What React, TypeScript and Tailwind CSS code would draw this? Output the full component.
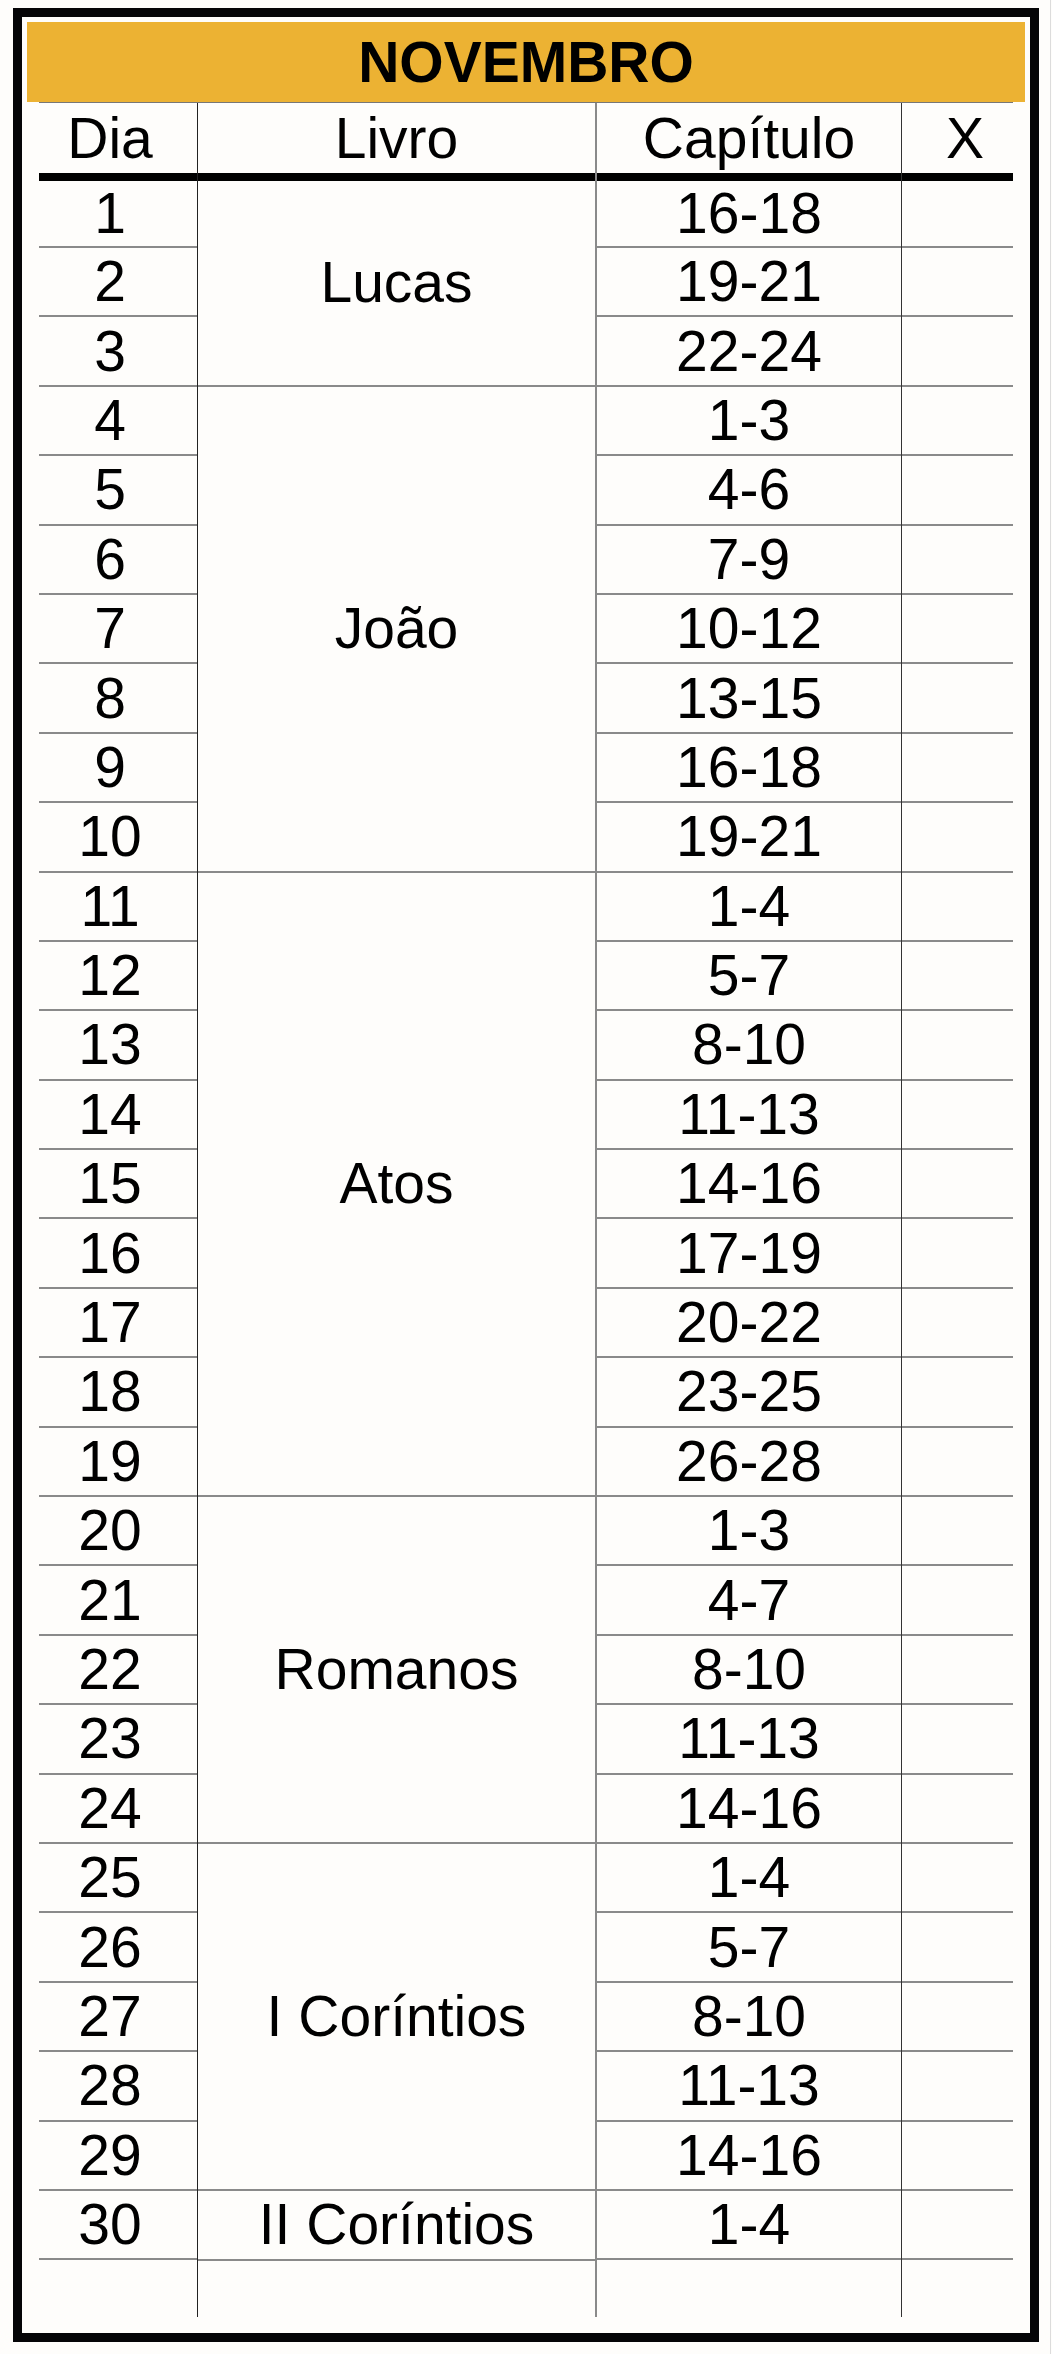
import React from "react";

const caps = [
  "16-18", "19-21", "22-24",
  "1-3", "4-6", "7-9", "10-12", "13-15", "16-18", "19-21",
  "1-4", "5-7", "8-10", "11-13", "14-16", "17-19", "20-22", "23-25", "26-28",
  "1-3", "4-7", "8-10", "11-13", "14-16",
  "1-4", "5-7", "8-10", "11-13", "14-16",
  "1-4",
];

const groups: { name: string; cls: string }[] = [
  { name: "Lucas", cls: "h-[205.8px]" },
  { name: "João", cls: "h-[485.8px]" },
  { name: "Atos", cls: "h-[624.6px]" },
  { name: "Romanos", cls: "h-[347px]" },
  { name: "I Coríntios", cls: "h-[347px]" },
  { name: "II Coríntios", cls: "h-[69.4px]" },
];

function rowCls(i: number) {
  return i === 0 ? "h-[67px]" : "h-[69.4px]";
}

function Header({ label, extra = "" }: { label: string; extra?: string }) {
  return (
    <div className={`h-[70px] shrink-0 flex items-center justify-center ${extra}`}>
      {label}
    </div>
  );
}

function Rule() {
  return <div className="h-[8px] shrink-0 bg-black" />;
}

export default function App() {
  return (
    <div
      className="w-[1052px] h-[2354px] bg-[#fefdfb] flex text-black"
      style={{ fontFamily: '"Liberation Sans", Arial, sans-serif' }}
    >
      <div className="w-[1050px] h-full pt-[8px] pl-[13px]">
        <div className="w-[1026px] h-[2334px] border-[9px] border-[#050507] flex flex-col pt-[5px] px-[5px] pb-[16px]">
          <div className="h-[80px] shrink-0 bg-[#ecb233] flex items-center justify-center text-[57px] font-bold leading-none">
            NOVEMBRO
          </div>
          <div className="flex-1 mx-[12px] border-t border-[#777] flex text-[57px] leading-none">
            {/* Dia */}
            <div className="w-[158px] flex flex-col">
              <Header label="Dia" extra="pr-[16px]" />
              <Rule />
              {caps.map((_, i) => (
                <div
                  key={i}
                  className={`${rowCls(i)} shrink-0 border-b-2 border-[#8a8a8a] flex items-center justify-center pr-[16px]`}
                >
                  {i + 1}
                </div>
              ))}
              <div className="flex-1" />
            </div>
            {/* Livro */}
            <div className="w-[398px] flex flex-col border-l border-[#222]">
              <Header label="Livro" />
              <Rule />
              {groups.map((g) => (
                <div
                  key={g.name}
                  className={`${g.cls} shrink-0 border-b-2 border-[#8a8a8a] flex items-center justify-center`}
                >
                  {g.name}
                </div>
              ))}
              <div className="flex-1" />
            </div>
            {/* Capitulo */}
            <div className="w-[306px] flex flex-col border-l-2 border-[#8a8a8a]">
              <Header label="Capítulo" />
              <Rule />
              {caps.map((c, i) => (
                <div
                  key={i}
                  className={`${rowCls(i)} shrink-0 border-b-2 border-[#8a8a8a] flex items-center justify-center`}
                >
                  {c}
                </div>
              ))}
              <div className="flex-1" />
            </div>
            {/* X */}
            <div className="flex-1 flex flex-col border-l border-[#333]">
              <Header label="X" extra="pl-[15px]" />
              <Rule />
              {caps.map((_, i) => (
                <div
                  key={i}
                  className={`${rowCls(i)} shrink-0 border-b-2 border-[#8a8a8a]`}
                />
              ))}
              <div className="flex-1" />
            </div>
          </div>
        </div>
      </div>
      <div className="w-px h-full bg-[#dcdcdc]" />
      <div className="w-px h-full" />
    </div>
  );
}
